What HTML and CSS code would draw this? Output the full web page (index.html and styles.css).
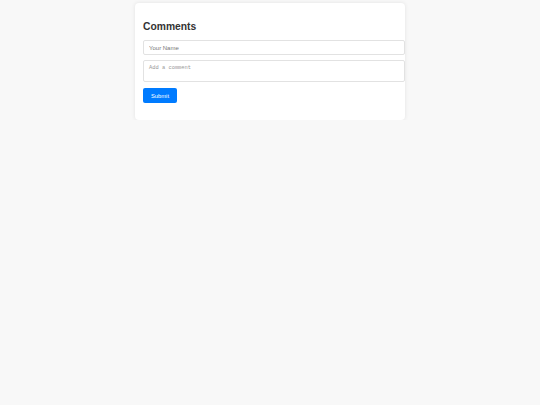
FILE: index.html
```html
<!DOCTYPE html>
<html>
<head>
<meta charset="utf-8">
<link rel="stylesheet" href="styles.css">
</head>
<body>
<div class="card">
  <h2 class="title">Comments</h2>
  <form class="form">
    <input class="field" type="text" placeholder="Your Name">
    <textarea class="field area" placeholder="Add a comment"></textarea>
    <button class="btn" type="button">Submit</button>
  </form>
</div>
</body>
</html>
```
FILE: styles.css
```css
html, body {
  margin: 0;
  padding: 0;
  background: #f8f8f8;
  font-family: "Liberation Sans", Arial, sans-serif;
}
.card {
  box-sizing: border-box;
  width: 270px;
  margin: 3px auto 0;
  padding: 8px 8px 17px;
  background: #fff;
  border-radius: 4px;
  box-shadow: 0 0 4px rgba(0,0,0,0.09);
}
.title {
  margin: 10px 0 7px;
  font-size: 10.3px;
  line-height: 12px;
  font-weight: bold;
  color: #333;
}
.form {
  display: flex;
  flex-direction: column;
  align-items: flex-start;
  margin: 0;
}
.field {
  box-sizing: border-box;
  width: 262px;
  height: 15px;
  margin: 0;
  padding: 0 5px;
  border: 1px solid #e2e2e2;
  border-radius: 2px;
  font-family: "Liberation Sans", Arial, sans-serif;
  font-size: 6px;
  color: #333;
  outline: none;
}
.field::placeholder {
  color: #777;
}
.area {
  height: 22px;
  margin-top: 5px;
  padding: 4px 5px;
  resize: none;
  font-family: "Liberation Mono", monospace;
  font-size: 5.4px;
  line-height: 7px;
}
.area::placeholder {
  color: #999;
}
.btn {
  box-sizing: border-box;
  width: 34px;
  height: 15px;
  margin-top: 6px;
  padding: 0;
  border: none;
  border-radius: 2px;
  background: #007bff;
  color: #fff;
  font-family: "Liberation Sans", Arial, sans-serif;
  font-size: 5.8px;
  cursor: pointer;
}
```
